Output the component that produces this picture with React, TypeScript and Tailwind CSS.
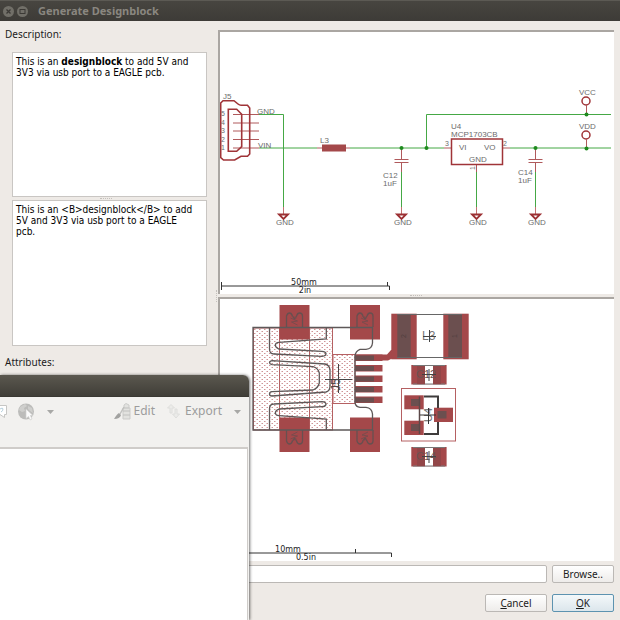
import type { ReactNode } from "react";

const RED = "#a4484a";
const WIRE = "#45a845";
const DARK = "#6b4f4f";

function GroundSymbol({ x, from }: { x: number; from: number }) {
  return (
    <g>
      <path d={`M${x} ${from}V207`} stroke={WIRE} />
      <path d={`M${x} 207V214`} stroke="#c07070" />
      <path d={`M${x - 4.5} 214.5h9l-4.5 4.5z`} stroke="#9c3033" strokeWidth="1.8" fill="#fff" />
      <text x={x - 7.5} y="225">GND</text>
    </g>
  );
}

function Capacitor({ x }: { x: number }) {
  return (
    <g>
      <path d={`M${x} 148V159.5M${x - 7} 159.5h14M${x - 7} 162.5h14M${x} 162.5V172`} stroke="#b05a5c" />
      <circle cx={x} cy="148" r="2" fill="#1e8a1e" />
    </g>
  );
}

function Supply({ y, name }: { y: number; name: string }) {
  return (
    <g>
      <text x="579" y={y - 6}>{name}</text>
      <circle cx="586" cy={y} r="4" stroke="#a03438" strokeWidth="1.5" fill="#fff" />
      <path d={`M586.5 ${y + 4}v9`} stroke="#b05a5c" />
      <circle cx="586.5" cy={y + 13.5} r="2" fill="#1e8a1e" />
    </g>
  );
}

function Schematic() {
  return (
    <svg viewBox="220 32 393 262" preserveAspectRatio="xMinYMin meet" className="block h-[262px] w-full" role="img" aria-label="Schematic preview">
      <g fill="none" strokeWidth="1">
        <g fontFamily='"Liberation Sans", sans-serif' fontSize="8">
          <g stroke={WIRE}>
            <path d="M259 114.5H283.5V207M259 148H317M350 148H444M426.5 148V114.5H611M510 148H611" />
          </g>
          <g stroke="#b05a5c">
            <path d="M233 114.5H259M233 123H259M233 131H259M233 139.5H259M233 148H259M317 148H350M444 148H451M503 148H510M476.5 165V172" />
          </g>
          <path d="M220.7 103L223 100.7H234L238 104Q239.500 105.300 241 105.300H247.500L249.700 108V154L247.500 156.300H241L234.700 160H223.500L220.700 157.500Z" stroke="#a03438" strokeWidth="1.6" />
          <path d="M228.300 109.300H236.700L241.700 114.300V146.700L236.700 151.300H228.300Z" stroke="#a03438" strokeWidth="1.6" />
          <rect x="322" y="144.500" width="24" height="7" fill={RED} />
          <rect x="451.500" y="139" width="51" height="25.500" stroke="#a03438" strokeWidth="1.500" />
          <circle cx="426.500" cy="148" r="2" fill="#1e8a1e" />
          <g fill="#6c6c6c">
            <text x="223" y="99">J5</text>
            <text x="257" y="114">GND</text>
            <text x="258" y="148">VIN</text>
            <text x="320" y="143">L3</text>
            <text x="383" y="178">C12</text>
            <text x="383" y="186">1uF</text>
            <text x="451" y="129">U4</text>
            <text x="451" y="137">MCP1703CB</text>
            <text x="459" y="150">VI</text>
            <text x="484" y="150">VO</text>
            <text x="469" y="162">GND</text>
            <text x="518" y="175">C14</text>
            <text x="518" y="183">1uF</text>
            <g fontSize="7">
              <text x="221" y="116">5</text>
              <text x="221" y="125">4</text>
              <text x="221" y="133">3</text>
              <text x="221" y="142">2</text>
              <text x="221" y="150">1</text>
              <text x="445" y="146">3</text>
              <text x="503" y="146">2</text>
              <text transform="translate(475 166) rotate(-90)" textAnchor="end">1</text>
            </g>
            <GroundSymbol x={283.5} from={200} />
            <GroundSymbol x={401.5} from={172} />
            <GroundSymbol x={476.5} from={172} />
            <GroundSymbol x={535.5} from={172} />
            <Capacitor x={401.5} />
            <Capacitor x={535.5} />
            <Supply y={101} name="VCC" />
            <Supply y={135} name="VDD" />
          </g>
        </g>
        <path d="M221.500 282V290M221 286H389.500M387.500 282V286M389.500 286V290" stroke="#333" />
        <g fill="#222" fontFamily='"DejaVu Sans", sans-serif' fontSize="8" textAnchor="middle">
          <text x="304" y="285">50mm</text>
          <text x="305" y="293">2in</text>
        </g>
      </g>
    </svg>
  );
}

function ShieldPad({ x, y, flip }: { x: number; y: number; flip?: boolean }) {
  return (
    <g transform={flip ? `translate(${x} ${y + 34.5}) scale(1 -1)` : `translate(${x} ${y})`}>
      <rect width="30" height="34.500" fill={RED} />
      <path d="M7 22V11Q8 8 10 8Q12 8 13 11L15 14L17 11Q18 8 20 8Q23 8 23 11V22" stroke="#675050" strokeWidth="1.3" fill="none" />
      <path d="M11 13L18 16L12 17L18 20M12 11L17 13" stroke="#7a4c4d" fill="none" />
    </g>
  );
}

function ChipPart({ y, name }: { y: number; name: string }) {
  return (
    <g>
      <rect x="411.300" y={y} width="35.300" height="19.500" fill={RED} />
      <rect x="425" y={y} width="8" height="19.500" fill="#fff" />
      <path d={`M413 ${y + 0.5}H445M413 ${y + 19}H445`} stroke="#777" />
      <path d={`M417 ${y + 1}h8v18h-8zM433 ${y + 1}h8v18h-8z`} fill="#924648" />
      <text x="416" y={y + 13} fontSize="11" fill="#6b5353">{name}</text>
      <path d={`M422 ${y + 9.5}H436M429 ${y + 4}V${y + 16}`} stroke="#444" />
    </g>
  );
}

function Board() {
  const spring =
    "M269.500 328V349Q269.500 354 274 354L322 356.300Q326 356 326 353.500Q325.500 351.500 322 351.300L279 349Q275.500 348 275.300 345Q275.500 342.500 279 342.300L326.300 339V328";
  const pins = [354.5, 365, 375.5, 386, 396.5];
  return (
    <svg viewBox="220 299 393 262" preserveAspectRatio="xMinYMin meet" className="block h-[262px] w-full" role="img" aria-label="Board preview">
      <defs>
        <pattern id="dots" x="254" y="329" width="5" height="4" patternUnits="userSpaceOnUse">
          <rect width="1.500" height="1" fill="#cf9496" />
          <rect x="2.500" y="2" width="1.500" height="1" fill="#cf9496" />
        </pattern>
      </defs>
      <g fill="none" strokeWidth="1" fontFamily='"Liberation Sans", sans-serif'>
        <rect x="253.500" y="328" width="79" height="102" fill="url(#dots)" stroke="#b56062" />
        <rect x="333" y="354.500" width="22" height="49" fill="url(#dots)" stroke="#b56062" />
        <path d="M279.500 328V430M309.500 328V430" stroke="#b56062" />
        <ShieldPad x={279.5} y={305} />
        <ShieldPad x={350} y={305} />
        <ShieldPad x={279.5} y={417.5} flip />
        <ShieldPad x={350} y={417.5} flip />
        <path d="M355 354.500H387L391 350H397V358L391 359L388 360.500H355Z" fill={RED} />
        {pins.map((y) => (
          <g key={y}>
            <rect x="355" y={y} width="27.500" height="6.500" fill={RED} />
            <rect x="355" y={y + 1} width="19" height="5" fill={DARK} />
          </g>
        ))}
        <g stroke="#5e5858" strokeWidth="1.300">
          <path d="M253 327.500H372.500V343Q372 349 366 349.300H360Q355.500 351 355 356V403Q356 407 360 407.300H366Q372 408 372.500 414V430H253Z" />
          <path d={spring} />
          <path d={spring} transform="translate(0 758) scale(1 -1)" />
          <path d="M272 360.700L325 364Q329.500 365 330 370V386Q330 391 326 392L272 396Q269.500 396 269.500 394Q269.500 392 272 391.700L313 390Q318 388 319.300 383V373Q318 368 313 366.700L272 364.700Q269.500 364 269.500 362.500Q270 361 272 360.700Z" />
        </g>
        <path d="M325 379.500H352M338.500 364V393" stroke="#444" />
        <text transform="translate(340 391) rotate(-90)" fontSize="12" fill="#504848">J5</text>

        <rect x="391.300" y="313.700" width="25.400" height="45.600" fill={RED} />
        <rect x="443.300" y="313.700" width="25.400" height="45.600" fill={RED} />
        <rect x="397.300" y="315" width="13.400" height="42.500" fill={DARK} />
        <rect x="448.300" y="315" width="13.700" height="42.500" fill={DARK} />
        <path d="M397 314.500H462M397 357.500H462" stroke="#666" />
        <g fontSize="7" fill="#513f3f">
          <text transform="translate(406 338) rotate(-90)">2</text>
          <text transform="translate(457 338) rotate(-90)">1</text>
        </g>
        <text x="422" y="340" fontSize="12" fill="#777">L3</text>
        <path d="M423 336.500H436M429.500 330V342" stroke="#444" />

        <ChipPart y={365} name="C12" />
        <ChipPart y={447} name="C14" />

        <rect x="401.500" y="388.500" width="54" height="52.500" stroke="#b56062" />
        <rect x="404.300" y="395.300" width="19.400" height="14" fill={RED} />
        <rect x="404.300" y="420.700" width="19.400" height="14.300" fill={RED} />
        <rect x="434" y="407.700" width="19" height="14.300" fill={RED} />
        <path d="M411 399h9v7h-9zM411 424h9v7h-9zM437.500 411h9v7.500h-9z" fill={DARK} />
        <path d="M419.500 396.500V434" stroke="#5c4848" strokeWidth="1.500" />
        <path d="M424 396.500H438V408M438 422V434H424" stroke="#3f3c3c" strokeWidth="2" />
        <text transform="translate(432 422) rotate(-90)" fontSize="11" fill="#666">U4</text>
        <path d="M420 415H436M428.500 408V424" stroke="#333" />

        <path d="M249 553H391.500M355.500 549V553M391.500 553V557" stroke="#333" />
        <g fill="#222" fontFamily='"DejaVu Sans", sans-serif' fontSize="8" textAnchor="middle">
          <text x="288" y="552">10mm</text>
          <text x="306" y="560">0.5in</text>
        </g>
      </g>
    </svg>
  );
}

function Preview({ children }: { children: ReactNode }) {
  return <section className="h-[264px] overflow-hidden border-t-2 border-l-2 border-[#aaa6a2] bg-white">{children}</section>;
}

function Splitter() {
  return (
    <div className="flex h-[3px] items-center justify-center">
      <div className="w-3 border-t border-dotted border-[#c4c0bc]" />
    </div>
  );
}

function DialogButton({ children, primary }: { children: ReactNode; primary?: boolean }) {
  return (
    <button
      type="button"
      className={
        primary
          ? "h-[18px] w-[62px] rounded-xs border border-[#5d93b0] bg-linear-to-b from-[#f4f8fa] to-[#dce6ec] text-[10px] leading-4"
          : "h-[18px] w-[62px] rounded-xs border border-[#bbb8b5] bg-linear-to-b from-white to-[#eeecea] text-[10px] leading-4"
      }
    >
      {children}
    </button>
  );
}

function BrowserWindow() {
  return (
    <div className="absolute bottom-0 left-0 flex h-[245px] w-[249px] flex-col rounded-tr-md bg-[#f2f1ef] shadow-[1px_0_3px_rgba(0,0,0,0.55)]">
      <div className="h-[22px] rounded-tr-md border-b border-[#3a3833] bg-linear-to-b from-[#5b584f] to-[#403e38]" />
      <div className="flex h-[50px] items-start pt-[6px] pr-[8px] font-['Noto_Sans',sans-serif] text-[12px] leading-4 text-[#9c9c9c]">
        <button type="button" aria-label="Help" className="h-4 w-[7px]">
          <svg width="7" height="16" viewBox="0 0 7 16" fill="#fff" stroke="#c6c6c4">
            <path d="M-3 2.500H6.500V11.500H4.500V14.500L0 11.500H-3Z" />
            <path d="M0 6Q3 4 3 6T1 9" stroke="#b6cfdc" fill="none" />
          </svg>
        </button>
        <button type="button" aria-label="Open in browser" className="ml-[10px] h-[18px] w-[18px]">
          <svg width="18" height="18" viewBox="0 0 18 18">
            <circle cx="9" cy="8.500" r="8" fill="#bcbcba" />
            <path d="M3 4L8 1L10 3L7 5L8 8L5 9L2 7ZM11 3L15 5L16 10L13 8L11 6Z" fill="#cfcfcd" />
            <path d="M9 6V15.500L11.500 13.500L13 17L15 16L13.500 12.500H16Z" fill="#fafafa" stroke="#d0d0ce" strokeWidth="0.700" />
          </svg>
        </button>
        <button type="button" aria-label="More" className="ml-3 h-4 w-[7px]">
          <svg width="7" height="16" viewBox="0 0 7 16"><path d="M0 7H7L3.500 11Z" fill="#a8a8a6" /></svg>
        </button>
        <button type="button" className="ml-auto flex gap-[3px]">
          <svg width="17" height="18" viewBox="0 0 17 18">
            <path d="M10 2L12 0.500L15 2V5H10ZM9 5H16V16H9Z" fill="#e2e2df" stroke="#cbcbc9" />
            <path d="M9 8H16M9 12H16" stroke="#c0c0be" />
            <path d="M0 16Q3 11 5 10L7 12Q6 16 0 16Z" fill="#a2a2a0" />
            <path d="M6 11L10 4" stroke="#c0c0be" strokeWidth="1.500" />
          </svg>
          Edit
        </button>
        <button type="button" className="ml-3 flex gap-[5px]">
          <svg width="13" height="16" viewBox="0 0 13 16" fill="#ebebe9" stroke="#dededc">
            <path d="M3 10V5H0.500L4 1.500L7.500 5H5V10Z" />
            <path d="M8 6H10V11H12.500L9 15L5.500 11H8Z" />
          </svg>
          Export
        </button>
        <button type="button" aria-label="Export options" className="ml-3 h-4 w-[7px]">
          <svg width="7" height="16" viewBox="0 0 7 16"><path d="M0 7H7L3.500 11Z" fill="#a8a8a6" /></svg>
        </button>
      </div>
      <div className="mr-px flex-1 border-t-2 border-r border-[#cfccc9] bg-white" />
    </div>
  );
}

export default function App() {
  return (
    <div className="relative flex min-h-screen flex-col overflow-hidden bg-[#eeeae6] font-['DejaVu_Sans_Condensed','DejaVu_Sans',sans-serif] text-[10px] text-[#1c1c1c]">
      <header className="flex h-[21px] items-center gap-[3px] border-t border-[#5c5a54] bg-linear-to-b from-[#474540] to-[#3d3b37] pl-[3px]">
        <button type="button" aria-label="Close" className="h-[11px] w-[11px]">
          <svg width="11" height="11" viewBox="0 0 11 11"><circle cx="5.500" cy="5.500" r="5.500" fill="#716f68" /><path d="M3.500 3.500L7.500 7.500M7.500 3.500L3.500 7.500" stroke="#3b3935" strokeWidth="1.300" /></svg>
        </button>
        <button type="button" aria-label="Maximize" className="h-[11px] w-[11px]">
          <svg width="11" height="11" viewBox="0 0 11 11"><circle cx="5.500" cy="5.500" r="5.500" fill="#716f68" /><rect x="3" y="3.500" width="5" height="4" fill="none" stroke="#3b3935" /></svg>
        </button>
        <h1 className="ml-[7px] font-['Noto_Sans',sans-serif] text-[11px] font-bold text-[#8a8780]">Generate Designblock</h1>
      </header>

      <main className="flex pt-[9px]">
        <div className="flex w-[215px] flex-col pr-2 pl-[5px]">
          <label htmlFor="description" className="mb-[13px] h-[9px] font-['Noto_Sans',sans-serif] leading-[9px]">Description:</label>
          <div className="ml-[7px] h-[145px] border border-[#c9c6c3] bg-white px-[3px] py-[3px] leading-[11px] text-black">
            This is an <b>designblock</b> to add 5V and 3V3 via usb port to a EAGLE pcb.
          </div>
          <Splitter />
          <textarea
            id="description"
            className="ml-[7px] h-[146px] resize-none border border-[#c9c6c3] bg-white py-[3px] pr-[10px] pl-[3px] leading-[11px] text-black outline-none"
            defaultValue="This is an <B>designblock</B> to add 5V and 3V3 via usb port to a EAGLE pcb."
          />
          <h2 className="mt-[9px] font-['Noto_Sans',sans-serif] leading-[14px]">Attributes:</h2>
        </div>
        <div className="flex w-[3px] flex-col items-center justify-center">
          <div className="h-3 border-l border-dotted border-[#c4c0bc]" />
        </div>
        <div className="mr-[6px] flex min-w-0 flex-1 flex-col">
          <Preview><Schematic /></Preview>
          <Splitter />
          <Preview><Board /></Preview>
        </div>
      </main>

      <footer className="flex flex-col gap-[11px] px-[6px] pt-[4px] font-['Noto_Sans',sans-serif]">
        <div className="flex gap-[5px]">
          <input type="text" aria-label="File name" className="h-[18px] min-w-0 flex-1 rounded-xs border border-[#bbb8b5] bg-white px-1 outline-none" />
          <DialogButton>Browse..</DialogButton>
        </div>
        <div className="flex justify-end gap-[5px]">
          <DialogButton><u>C</u>ancel</DialogButton>
          <DialogButton primary><u>O</u>K</DialogButton>
        </div>
      </footer>

      <BrowserWindow />
    </div>
  );
}
